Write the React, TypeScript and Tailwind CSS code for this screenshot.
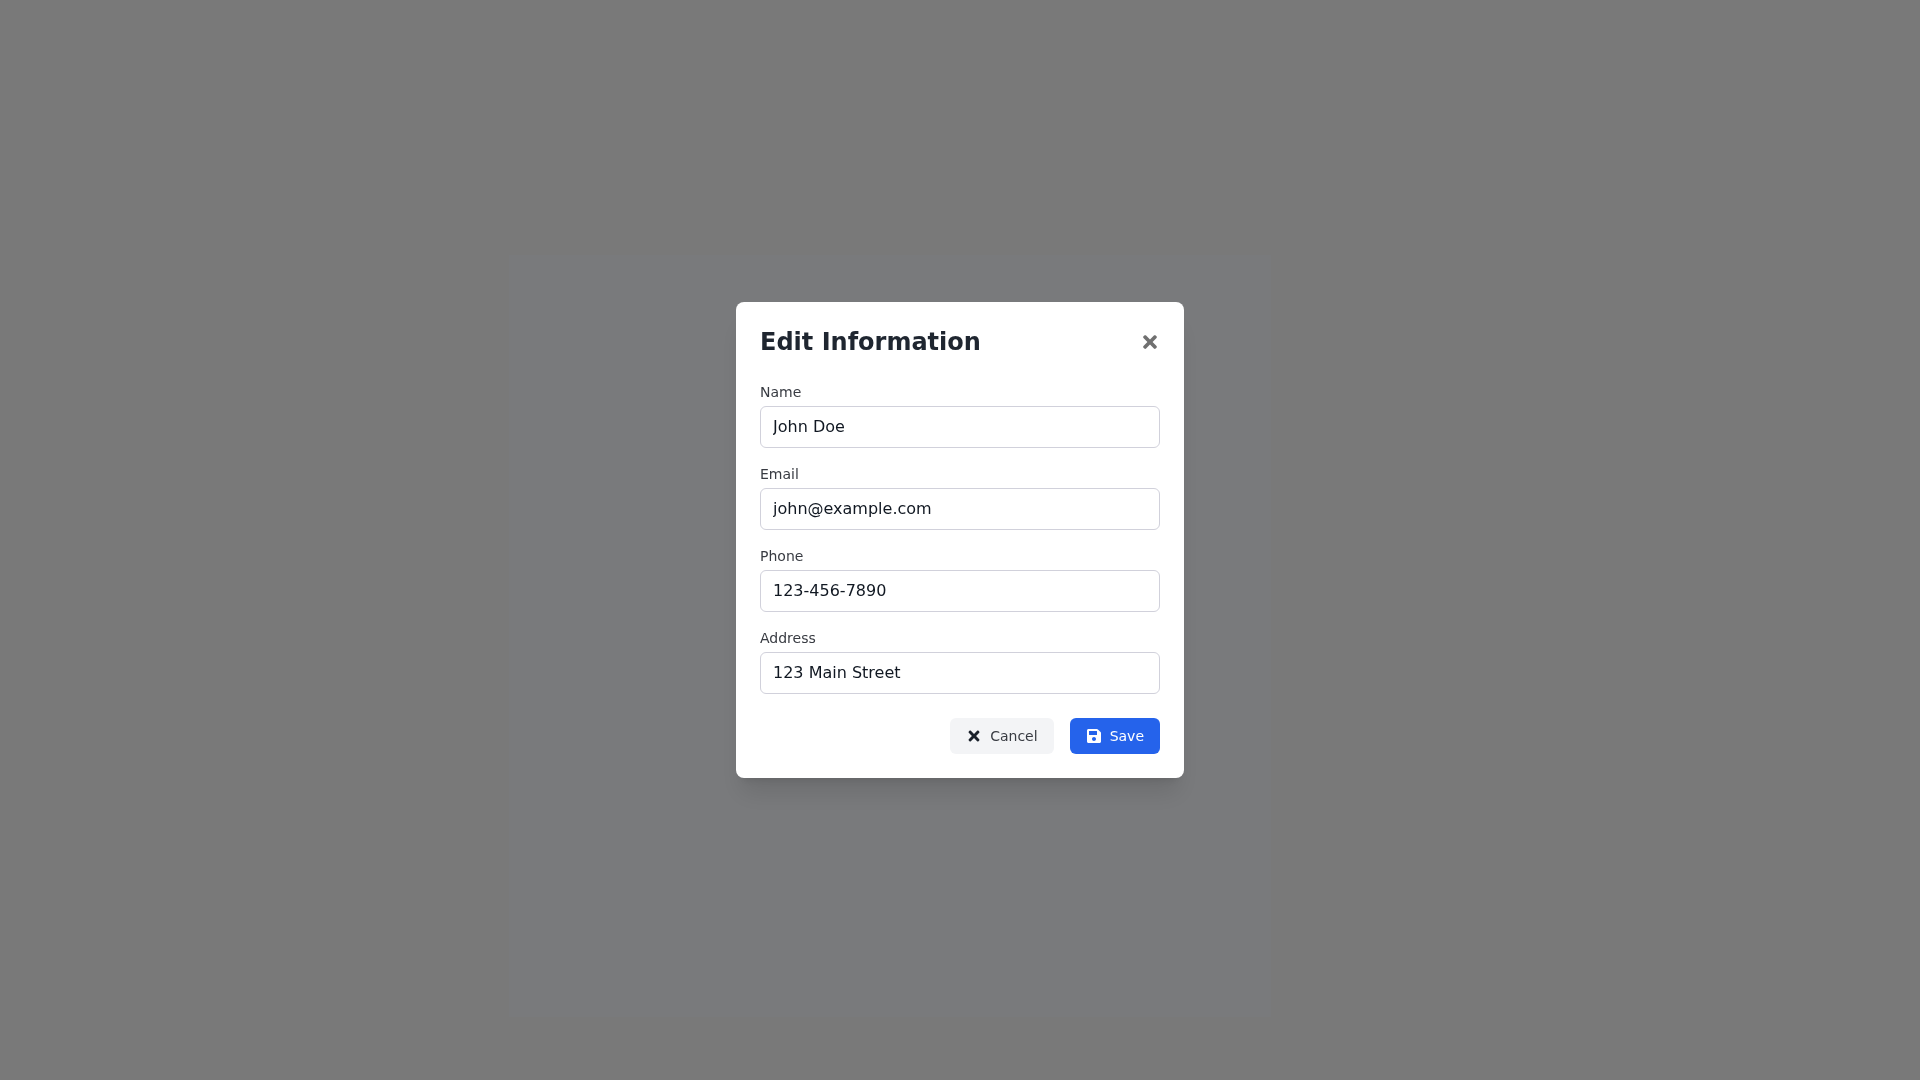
import { useState } from "react";
import type { ChangeEvent, FormEvent } from "react";
import { FaSave, FaTimes } from "react-icons/fa";

const fields = [
    { name: "name", label: "Name", type: "text" },
    { name: "email", label: "Email", type: "email" },
    { name: "phone", label: "Phone", type: "tel" },
    { name: "address", label: "Address", type: "text" },
] as const;

const initialData = {
    name: "John Doe",
    email: "john@example.com",
    phone: "123-456-7890",
    address: "123 Main Street",
};

const EditModal = ({ onClose }: { onClose: () => void }) => {
    const [data, setData] = useState(initialData);

    const handleChange = (e: ChangeEvent<HTMLInputElement>) => {
        setData({ ...data, [e.target.name]: e.target.value });
    };

    const handleSubmit = (e: FormEvent) => {
        e.preventDefault();
        onClose();
    };

    return (
        <div
            role="dialog"
            aria-modal="true"
            aria-labelledby="edit-title"
            className="w-full max-w-md rounded-lg bg-white p-6 shadow-xl"
        >
            <div className="mb-6 flex items-center justify-between">
                <h2 id="edit-title" className="text-2xl font-bold text-[#1f2630]">
                    Edit Information
                </h2>
                <button
                    type="button"
                    aria-label="Close"
                    onClick={onClose}
                    className="text-[#707070]"
                >
                    <FaTimes size={20} />
                </button>
            </div>
            <form onSubmit={handleSubmit}>
                <div className="flex flex-col gap-4">
                    {fields.map((field) => (
                        <div key={field.name}>
                            <label
                                htmlFor={field.name}
                                className="mb-1 block text-sm text-[#383b42]"
                            >
                                {field.label}
                            </label>
                            <input
                                id={field.name}
                                name={field.name}
                                type={field.type}
                                value={data[field.name]}
                                onChange={handleChange}
                                className="w-full rounded-md border border-[#d1d1db] px-3 py-2 text-base text-[#111822]"
                            />
                        </div>
                    ))}
                </div>
                <div className="mt-6 flex justify-end gap-4">
                    <button
                        type="button"
                        onClick={onClose}
                        className="flex items-center gap-2 rounded-md bg-[#f3f4f6] px-4 py-2 text-sm text-[#383b42]"
                    >
                        <FaTimes size={16} className="text-[#1a212b]" />
                        Cancel
                    </button>
                    <button
                        type="submit"
                        className="flex items-center gap-2 rounded-md bg-[#2563eb] px-4 py-2 text-sm text-white"
                    >
                        <FaSave size={16} />
                        Save
                    </button>
                </div>
            </form>
        </div>
    );
};

const App = () => {
    const [open, setOpen] = useState(true);

    return (
        <div className="min-h-screen bg-[#f2f2f2] pt-[255px] font-['DejaVu_Sans',sans-serif]">
            <main className="ml-[26.5%] aspect-square w-[39.7%] bg-[#f2f4f8]" />
            {open && (
                <div className="fixed inset-0 flex items-center justify-center bg-black/50 p-4">
                    <EditModal onClose={() => setOpen(false)} />
                </div>
            )}
        </div>
    );
};

export default App;
